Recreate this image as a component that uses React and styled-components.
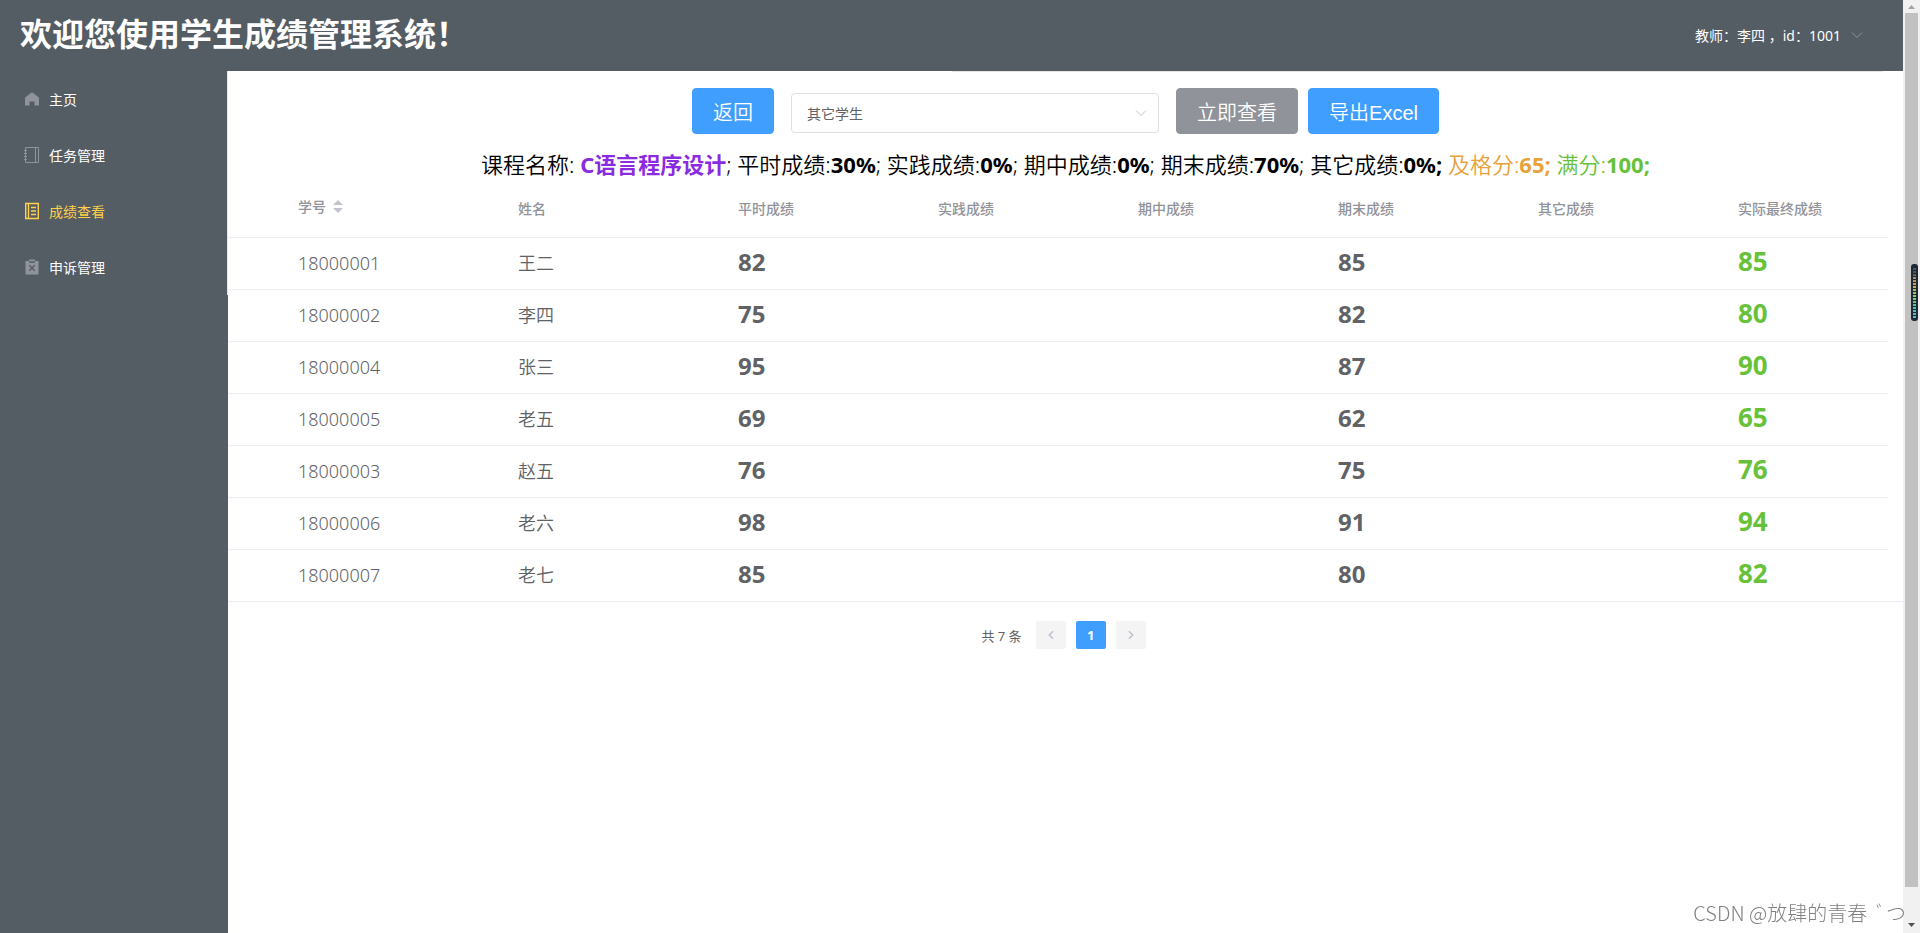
import React from 'react';
import styled, { createGlobalStyle } from 'styled-components';

const Global = createGlobalStyle`
  *, *::before, *::after { box-sizing: border-box; }
  body {
    margin: 0;
    background: #fff;
    color: #000;
    font-family: "Noto Sans", "Noto Sans CJK SC", sans-serif;
    font-size: 14px;
  }
  button, select { font-family: inherit; }
`;

const Window = styled.div`
  display: flex;
  min-height: 100vh;
`;

const Page = styled.div`
  flex: 1;
  min-width: 0;
  display: flex;
  flex-direction: column;
`;

const Header = styled.header`
  flex: none;
  display: grid;
  grid-template-columns: 1fr 1fr;
  height: 71px;
  padding: 0 20px;
  background: #545c64;
  color: #fff;
`;

const Title = styled.h1`
  margin: 0;
  font-size: 32px;
  line-height: 68px;
  font-weight: 700;
  white-space: nowrap;
`;

const UserBar = styled.div`
  display: flex;
  justify-content: flex-end;
  height: 72px;
  padding: 0 20px 2px 0;
  border-bottom: 1px solid #e6e6e6;
`;

const UserButton = styled.button`
  display: flex;
  align-items: center;
  gap: 10px;
  padding: 0;
  border: 0;
  background: none;
  color: #fff;
  font-size: 14px;

  svg { color: #909399; }
`;

const Body = styled.div`
  flex: 1;
  display: flex;
`;

const Sidebar = styled.aside`
  flex: none;
  width: 228px;
  background: #545c64;
`;

const Menu = styled.nav`
  display: flex;
  flex-direction: column;
  border-right: 1px solid #e6e6e6;
`;

const MenuItem = styled.a`
  display: flex;
  align-items: center;
  gap: 9px;
  height: 56px;
  padding: 0 24px;
  color: ${(p) => (p.$active ? '#ffd04b' : '#fff')};
  text-decoration: none;

  svg { color: ${(p) => (p.$active ? '#ffd04b' : '#909399')}; }
`;

const Main = styled.main`
  flex: 1;
  min-width: 0;
  padding-top: 17px;
`;

const Toolbar = styled.div`
  display: flex;
  align-items: center;
  justify-content: center;
`;

const ActionButton = styled.button`
  height: 46px;
  padding: 0 20px;
  border: 1px solid ${(p) => (p.$tone === 'info' ? '#909399' : '#409eff')};
  border-radius: 4px;
  background: ${(p) => (p.$tone === 'info' ? '#909399' : '#409eff')};
  color: #fff;
  font-family: "Liberation Sans", "Noto Sans CJK SC", sans-serif;
  font-size: 20px;
  font-weight: 350;
  & + & { margin-left: 10px; }
`;

const SelectBox = styled.label`
  position: relative;
  margin: 0 17px;
  padding-top: 4px;
  svg {
    position: absolute;
    right: 12px;
    top: 18px;
    color: #c0c4cc;
    pointer-events: none;
  }
`;

const Select = styled.select`
  display: block;
  appearance: none;
  width: 368px;
  height: 40px;
  padding: 0 15px;
  border: 1px solid #dcdfe6;
  border-radius: 4px;
  background: #fff;
  color: #606266;
  font-size: 14px;
`;

const Summary = styled.p`
  margin: 14px 0 0;
  font-size: 22px;
  font-weight: 350;
  line-height: 32px;
  text-align: center;
  white-space: nowrap;

  b { font-weight: 700; }
`;

const Tint = styled.span`
  color: ${(p) => p.$color};
`;

const TableWrap = styled.div`
  padding-right: 15px;
  border-bottom: 1px solid #ebeef5;
`;

const Table = styled.table`
  width: 100%;
  table-layout: fixed;
  border-collapse: separate;
  border-spacing: 0;
  color: #606266;
`;

const HeadCell = styled.th`
  height: 58px;
  padding: 0 10px;
  border-bottom: 1px solid #ebeef5;
  color: #909399;
  font-size: 14px;
  line-height: 24px;
  font-weight: 500;
  text-align: left;
  white-space: nowrap;
`;

const SortButton = styled.button`
  display: flex;
  align-items: center;
  gap: 7px;
  padding: 0 0 4px;
  border: 0;
  background: none;
  color: inherit;
  font-size: 14px;
  font-weight: 500;
  line-height: 24px;
`;

const Cell = styled.td`
  height: 52px;
  padding: 0 10px 2px;
  border-bottom: 1px solid #ebeef5;
  font-size: 18px;
  font-weight: 350;
  line-height: 24px;
  tbody tr:last-child & {
    height: 51px;
    border-bottom: 0;
  }
`;

const Score = styled.strong`
  font-size: ${(p) => (p.$final ? '26px' : '24px')};
  font-weight: 700;
  color: ${(p) => (p.$final ? '#67c23a' : 'inherit')};
`;

const Pagination = styled.nav`
  display: flex;
  align-items: center;
  justify-content: center;
  gap: 10px;
  padding: 19px 4px 0 0;
  color: #606266;
  font-size: 13px;
`;

const Total = styled.span`
  margin-right: 4px;
`;

const PageButton = styled.button`
  display: flex;
  align-items: center;
  justify-content: center;
  width: 30px;
  height: 28px;
  padding: 0;
  border: 0;
  border-radius: 2px;
  background: ${(p) => (p.$current ? '#409eff' : '#f4f4f5')};
  color: ${(p) => (p.$current ? '#fff' : '#c0c4cc')};
  font-size: 13px;
  font-weight: 700;
`;

const Scrollbar = styled.div`
  flex: none;
  position: relative;
  display: flex;
  flex-direction: column;
  align-items: center;
  width: 17px;
  background: #f1f1f1;
`;

const ScrollArrow = styled.div`
  display: flex;
  align-items: center;
  justify-content: center;
  height: ${(p) => (p.$end ? '46px' : '13px')};
  padding-top: ${(p) => (p.$end ? '30px' : '0')};
`;

const Thumb = styled.div`
  flex: 1;
  width: 13px;
  background: #c1c1c1;
`;

const Meter = styled.div`
  position: absolute;
  top: 264px;
  right: 2px;
  width: 7px;
  height: 57px;
  padding: 3px 2px;
  border-radius: 3px;
  background: #1d2a35;

  &::before {
    content: "";
    display: block;
    height: 100%;
    background:
      repeating-linear-gradient(#1d2a35 0 1px, transparent 1px 3px),
      linear-gradient(#555 0 8px, #b08068 9px, #c9b054 20px, #86cf62 30px, #4cc5a0 40px, #5ab4dc);
  }
`;

const Watermark = styled.div`
  position: fixed;
  right: 14px;
  bottom: 5px;
  color: #808080;
  font-family: "Noto Sans CJK SC", sans-serif;
  font-weight: 300;
  font-size: 20px;
  line-height: 30px;
  white-space: pre;
`;

const Chevron = ({ dir = 'down', size = 10, width = 1 }) => {
  const d = {
    down: 'M1 3.5 6 8.5 11 3.5',
    left: 'M8.5 1.5 4 6 8.5 10.5',
    right: 'M3.5 1.5 8 6 3.5 10.5',
  }[dir];
  return (
    <svg width={size} height={size} viewBox="0 0 12 12" fill="none" stroke="currentColor" strokeWidth={width} aria-hidden="true">
      <path d={d} />
    </svg>
  );
};

const HomeIcon = () => (
  <svg width="16" height="16" viewBox="0 0 16 16" fill="currentColor" aria-hidden="true">
    <path d="M8 1.5Q8.600 1.500 9.200 2L14.200 6Q15 6.700 15 7.600V14.500H10.500V10.500H5.500V14.500H1V7.600Q1 6.700 1.800 6L6.800 2Q7.400 1.500 8 1.500Z" />
  </svg>
);

const NotebookIcon = () => (
  <svg width="16" height="18" viewBox="0 0 16 18" fill="none" stroke="currentColor" aria-hidden="true">
    <path d="M1.500 1.500h13v15h-13ZM11.500 1.500v15M0 4.500h3M0 7.500h3M0 10.500h3M0 13.500h3" />
  </svg>
);

const TicketIcon = () => (
  <svg width="16" height="18" viewBox="0 0 16 18" fill="none" stroke="currentColor" strokeWidth="1.4" aria-hidden="true">
    <path d="M1.700 1.500h12.600v15H1.700ZM4.500 1.500v15M7 5.500h5M7 9h5M7 12.500h5" />
  </svg>
);

const ReleaseIcon = () => (
  <svg width="16" height="18" viewBox="0 0 16 18" aria-hidden="true">
    <path d="M1.500 3H5V1.500h6V3h3.500v13.500h-13Z" fill="currentColor" />
    <path d="M5 4h6M5.300 7.300l5.400 5.400M10.700 7.300l-5.400 5.400" stroke="#545c64" strokeWidth="1.4" fill="none" />
  </svg>
);

const SortIcon = () => (
  <svg width="10" height="13" viewBox="0 0 10 13" fill="#c0c4cc" aria-hidden="true">
    <path d="M5 0 10 5H0ZM0 8h10L5 13Z" />
  </svg>
);

const menu = [
  { label: '主页', Icon: HomeIcon },
  { label: '任务管理', Icon: NotebookIcon },
  { label: '成绩查看', Icon: TicketIcon, active: true },
  { label: '申诉管理', Icon: ReleaseIcon },
];

const columns = ['姓名', '平时成绩', '实践成绩', '期中成绩', '期末成绩', '其它成绩', '实际最终成绩'];
const columnWidths = [60, 220, 220, 200, 200, 200, 200, 200];

const students = [
  ['18000001', '王二', 82, 85, 85],
  ['18000002', '李四', 75, 82, 80],
  ['18000004', '张三', 95, 87, 90],
  ['18000005', '老五', 69, 62, 65],
  ['18000003', '赵五', 76, 75, 76],
  ['18000006', '老六', 98, 91, 94],
  ['18000007', '老七', 85, 80, 82],
];

export default function App() {
  return (
    <Window>
      <Global />
      <Page>
        <Header>
          <Title>欢迎您使用学生成绩管理系统！</Title>
          <UserBar>
            <UserButton>
              <span>教师：李四 ，id：1001</span>
              <Chevron size={12} />
            </UserButton>
          </UserBar>
        </Header>
        <Body>
          <Sidebar>
            <Menu>
              {menu.map(({ label, Icon, active }) => (
                <MenuItem key={label} href="#" $active={active}>
                  <Icon />
                  <span>{label}</span>
                </MenuItem>
              ))}
            </Menu>
          </Sidebar>
          <Main>
            <Toolbar>
              <ActionButton>返回</ActionButton>
              <SelectBox>
                <Select aria-label="学生" defaultValue="other">
                  <option value="other">其它学生</option>
                </Select>
                <Chevron size={12} />
              </SelectBox>
              <ActionButton $tone="info">立即查看</ActionButton>
              <ActionButton>导出Excel</ActionButton>
            </Toolbar>
            <Summary>
              课程名称: <Tint as="b" $color="#8a2be2">C语言程序设计</Tint>; 平时成绩:<b>30%</b>; 实践成绩:<b>0%</b>; 期中成绩:<b>0%</b>; 期末成绩:<b>70%</b>; 其它成绩:<b>0%;</b>{' '}
              <Tint $color="#e6a23c">及格分:<b>65;</b></Tint>{' '}
              <Tint $color="#67c23a">满分:<b>100;</b></Tint>
            </Summary>
            <TableWrap>
              <Table>
                <colgroup>
                  {columnWidths.map((w, i) => <col key={i} width={w} />)}
                  <col />
                </colgroup>
                <thead>
                  <tr>
                    <HeadCell />
                    <HeadCell><SortButton>学号<SortIcon /></SortButton></HeadCell>
                    {columns.map((c) => <HeadCell key={c}>{c}</HeadCell>)}
                  </tr>
                </thead>
                <tbody>
                  {students.map(([id, name, usual, exam, final]) => (
                    <tr key={id}>
                      <Cell />
                      <Cell>{id}</Cell>
                      <Cell>{name}</Cell>
                      <Cell><Score>{usual}</Score></Cell>
                      <Cell />
                      <Cell />
                      <Cell><Score>{exam}</Score></Cell>
                      <Cell />
                      <Cell><Score $final>{final}</Score></Cell>
                    </tr>
                  ))}
                </tbody>
              </Table>
            </TableWrap>
            <Pagination aria-label="分页">
              <Total>共 7 条</Total>
              <PageButton aria-label="上一页"><Chevron dir="left" width={2} /></PageButton>
              <PageButton $current>1</PageButton>
              <PageButton aria-label="下一页"><Chevron dir="right" width={2} /></PageButton>
            </Pagination>
          </Main>
        </Body>
      </Page>
      <Scrollbar aria-hidden="true">
        <ScrollArrow>
          <svg width="7" height="4" viewBox="0 0 7 4"><path d="M3.5 0 7 4H0Z" fill="#a3a3a3" /></svg>
        </ScrollArrow>
        <Thumb />
        <ScrollArrow $end>
          <svg width="7" height="4" viewBox="0 0 7 4"><path d="M0 0h7L3.5 4Z" fill="#505050" /></svg>
        </ScrollArrow>
        <Meter />
      </Scrollbar>
      <Watermark>CSDN @放肆的青春  ﾞつ</Watermark>
    </Window>
  );
}
